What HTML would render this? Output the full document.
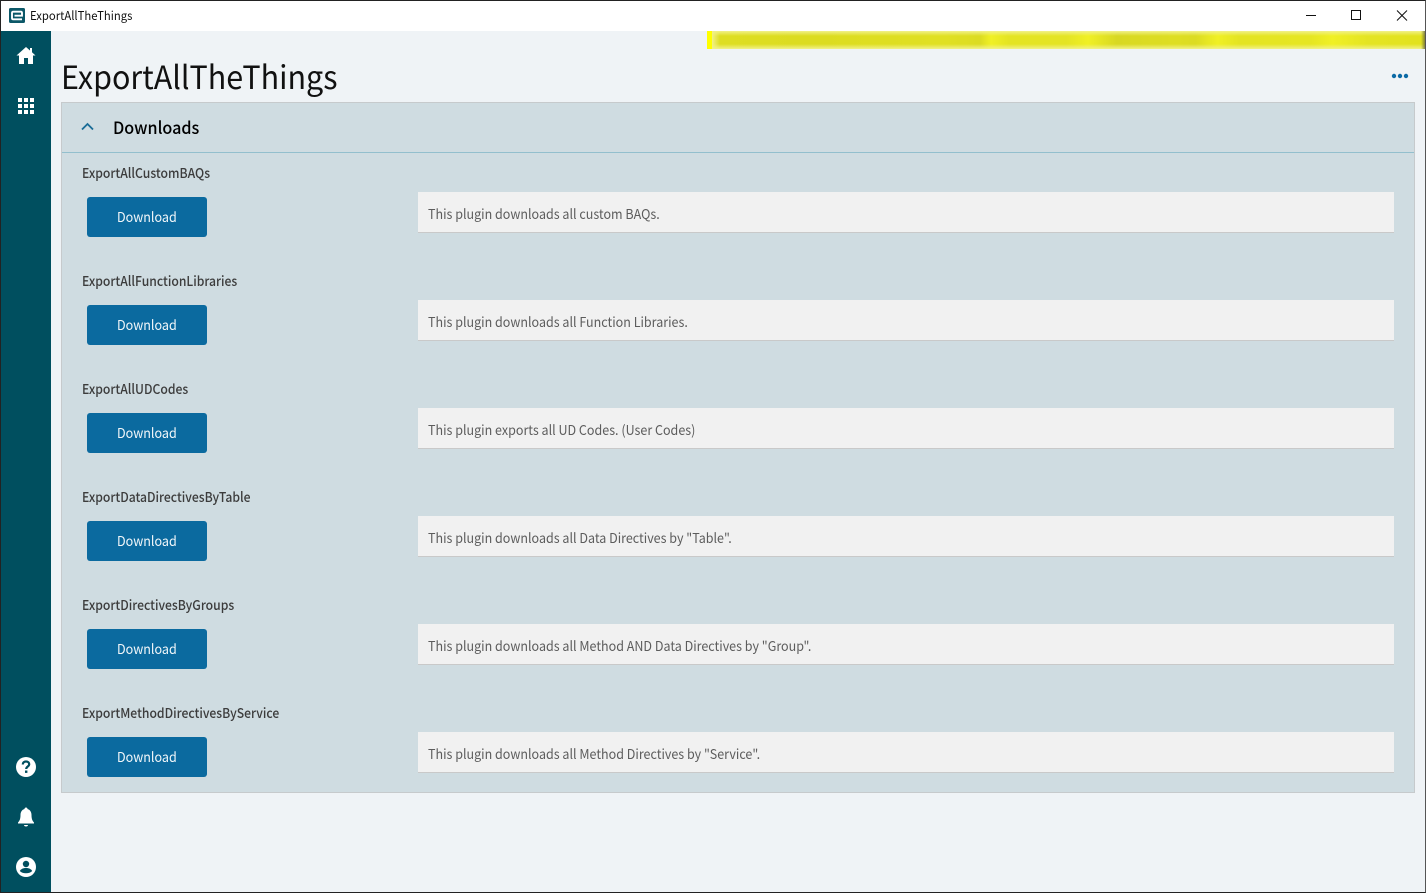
<!DOCTYPE html>
<html><head><meta charset="utf-8"><title>ExportAllTheThings</title>
<style>
*{box-sizing:border-box;margin:0;padding:0}
html,body{width:1426px;height:893px;overflow:hidden;background:#eff3f6;font-family:"Noto Sans CJK SC","Liberation Sans",sans-serif}
.t{white-space:nowrap}
.s{display:inline-block;transform-origin:0 50%;white-space:nowrap}
#frame{position:absolute;left:0;top:0;width:1426px;height:893px;border:1px solid #222;border-right-color:#555;z-index:9;pointer-events:none}
#tb{position:absolute;left:0;top:0;width:1426px;height:31px;background:#fff}
#side{position:absolute;left:0;top:31px;width:51px;height:862px;background:#004f5f}
#yellow{position:absolute;left:707px;top:31px;width:719px;height:18px;overflow:hidden;background:linear-gradient(90deg,#dede22 0,#dcdc20 15%,#e0e022 33%,#dcdc22 38%,#f0f024 39.5%,#e4e422 42%,#e4e424 50%,#f0f024 53%,#d8d822 57%,#dede22 65%,#dcdc22 68%,#f0f024 71%,#e4e422 74%,#e6e622 84%,#f0f024 87%,#e4e422 92%,#e2e21e 100%)}
#yellow i{position:absolute;left:0;right:0;top:0;height:5px;background:linear-gradient(#f1f188,rgba(241,241,136,0))}
#yellow b{position:absolute;left:0;right:0;bottom:0;height:5px;background:linear-gradient(rgba(241,241,136,0),#f1f188)}
#yellow u{position:absolute;left:0;top:0;width:5px;height:18px;background:#ffff00}
#yellow s{position:absolute;left:5px;top:0;width:8px;height:18px;background:linear-gradient(90deg,#f1f188,rgba(241,241,136,0))}
#yellow em{position:absolute;right:0;top:0;width:5px;height:18px;background:linear-gradient(90deg,rgba(90,90,40,0),#6a6a3a)}
#panel{position:absolute;left:61px;top:102px;width:1354px;height:691px;background:#cfdce1;border:1px solid #c6cacc}
#divider{position:absolute;left:62px;top:152px;width:1352px;height:1px;background:#93bfcd}
.lbl{position:absolute;left:82px;font-size:13.5px;line-height:20px;font-weight:500;color:#3c3c3c;white-space:nowrap}
.lbl .s{transform:scaleX(.902)}
.btn{position:absolute;left:87px;width:120px;height:40px;background:#0b6a9f;border-radius:3px;color:#f2f7fa;font-size:13.5px;line-height:39px;text-align:left;padding-left:30px}
.btn .s{transform:scaleX(.93)}
.desc{position:absolute;left:418px;width:976px;height:41px;background:#f1f1f1;border-bottom:1px solid #c9c9c9;color:#5c5c5c;font-size:13.5px;line-height:43px;padding-left:10px;white-space:nowrap}
.desc .s{transform:scaleX(.927)}
</style></head><body>
<div id="tb"></div>
<svg style="position:absolute;left:9px;top:8px" width="16" height="15" viewBox="0 0 16 15"><rect width="16" height="15" rx="1.5" fill="#0c5868"/><path d="M13 11.300H4.200Q3 11.300 3 10V5Q3 3.700 4.200 3.700H11.800Q13 3.700 13 5V7.700H5.500" fill="none" stroke="#fff" stroke-width="1.900"/></svg>
<div class="t" style="position:absolute;left:30px;top:8px;font-size:12px;line-height:16px;color:#111"><span class="s" style="transform:scaleX(.94)">ExportAllTheThings</span></div>
<svg style="position:absolute;left:1300px;top:8px" width="120" height="16" viewBox="0 0 120 16" fill="none" stroke="#111"><path d="M6 7.500H16"/><rect x="51.500" y="2.500" width="9" height="9"/><path d="M97 2.500L107 12.500M107 2.500L97 12.500"/></svg>
<div id="side"></div>
<svg style="position:absolute;left:16px;top:46px" width="20" height="18" viewBox="0 0 20 18" fill="#fff"><path d="M10 1L0.500 9.500H3V18H8V12H12V18H17V9.500H19.500L16 6.300V2H14V4.500Z"/></svg>
<svg style="position:absolute;left:18px;top:98px" width="16" height="16" viewBox="0 0 16 16" fill="#fff"><path d="M0 0h4v4H0zM6 0h4v4H6zM12 0h4v4h-4zM0 6h4v4H0zM6 6h4v4H6zM12 6h4v4h-4zM0 12h4v4H0zM6 12h4v4H6zM12 12h4v4h-4z"/></svg>
<svg style="position:absolute;left:16px;top:757px" width="20" height="20" viewBox="0 0 20 20"><circle cx="10" cy="10" r="10" fill="#fff"/><path d="M6.800 7.500C6.800 5.500 8.300 4.500 10 4.500C11.800 4.500 13.200 5.600 13.200 7.300C13.200 9.500 10.200 9.500 10.200 12" fill="none" stroke="#004f5f" stroke-width="2.200"/><rect x="9" y="13.500" width="2.400" height="2.400" fill="#004f5f"/></svg>
<svg style="position:absolute;left:18px;top:807px" width="16" height="20" viewBox="0 0 16 20" fill="#fff"><path d="M8 0.500C9 0.500 9.500 1.200 9.500 2C12 2.700 13.500 5 13.500 8C13.500 12 14.500 14 16 15.500V16.500H0V15.500C1.500 14 2.500 12 2.500 8C2.500 5 4 2.700 6.500 2C6.500 1.200 7 0.500 8 0.500Z"/><path d="M6 18H10C10 19 9 19.500 8 19.500C7 19.500 6 19 6 18Z"/></svg>
<svg style="position:absolute;left:16px;top:857px" width="20" height="20" viewBox="0 0 20 20"><circle cx="10" cy="10" r="10" fill="#fff"/><circle cx="10" cy="7" r="3.200" fill="#004f5f"/><path d="M3.800 14C5 11.800 7.500 11 10 11C12.500 11 15 11.800 16.200 14C14.800 15.500 12.500 16.300 10 16.300C7.500 16.300 5.200 15.500 3.800 14Z" fill="#004f5f"/></svg>
<div id="yellow"><i></i><b></b><s></s><em></em><u></u></div>
<div class="t" style="position:absolute;left:61px;top:55px;font-size:32px;line-height:42px;color:#111"><span class="s" style="transform:scaleX(.952)">ExportAllTheThings</span></div>
<svg style="position:absolute;left:1391px;top:73px" width="18" height="6" viewBox="0 0 18 6" fill="#0b6aa6"><circle cx="3" cy="3" r="2.200"/><circle cx="9" cy="3" r="2.200"/><circle cx="15" cy="3" r="2.200"/></svg>
<div id="panel"></div>
<svg style="position:absolute;left:81px;top:122px" width="13" height="9" viewBox="0 0 13 9" fill="none" stroke="#1a6c96" stroke-width="1.800"><path d="M1 7.500L6.500 2L12 7.500"/></svg>
<div class="t" style="position:absolute;left:113px;top:115px;font-size:17px;line-height:24px;font-weight:500;color:#000"><span class="s" style="transform:scaleX(.95)">Downloads</span></div>
<div id="divider"></div>

<div class="lbl" style="top:162px"><span class="s">ExportAllCustomBAQs</span></div>
<div class="btn" style="top:197px"><span class="s">Download</span></div>
<div class="desc" style="top:192px"><span class="s">This plugin downloads all custom BAQs.</span></div>

<div class="lbl" style="top:270px"><span class="s">ExportAllFunctionLibraries</span></div>
<div class="btn" style="top:305px"><span class="s">Download</span></div>
<div class="desc" style="top:300px"><span class="s">This plugin downloads all Function Libraries.</span></div>

<div class="lbl" style="top:378px"><span class="s">ExportAllUDCodes</span></div>
<div class="btn" style="top:413px"><span class="s">Download</span></div>
<div class="desc" style="top:408px"><span class="s">This plugin exports all UD Codes. (User Codes)</span></div>

<div class="lbl" style="top:486px"><span class="s">ExportDataDirectivesByTable</span></div>
<div class="btn" style="top:521px"><span class="s">Download</span></div>
<div class="desc" style="top:516px"><span class="s">This plugin downloads all Data Directives by "Table".</span></div>

<div class="lbl" style="top:594px"><span class="s">ExportDirectivesByGroups</span></div>
<div class="btn" style="top:629px"><span class="s">Download</span></div>
<div class="desc" style="top:624px"><span class="s">This plugin downloads all Method AND Data Directives by "Group".</span></div>

<div class="lbl" style="top:702px"><span class="s">ExportMethodDirectivesByService</span></div>
<div class="btn" style="top:737px"><span class="s">Download</span></div>
<div class="desc" style="top:732px"><span class="s">This plugin downloads all Method Directives by "Service".</span></div>
<div id="frame"></div>
</body></html>
